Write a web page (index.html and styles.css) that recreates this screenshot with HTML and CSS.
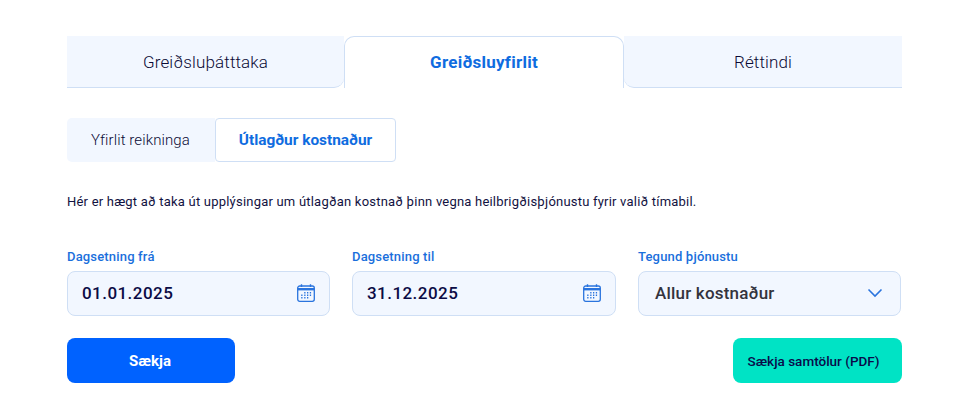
FILE: index.html
```html
<!DOCTYPE html>
<html lang="is">
<head>
<meta charset="utf-8">
<title>Greiðsluyfirlit</title>
<link rel="stylesheet" href="styles.css">
</head>
<body>
<main class="page">
  <nav class="tabs">
    <a class="tab">Greiðsluþátttaka</a>
    <a class="tab tab-active">Greiðsluyfirlit</a>
    <a class="tab">Réttindi</a>
  </nav>
  <div class="subtabs">
    <a class="subtab">Yfirlit reikninga</a>
    <a class="subtab subtab-active">Útlagður kostnaður</a>
  </div>
  <p class="intro">Hér er hægt að taka út upplýsingar um útlagðan kostnað þinn vegna heilbrigðisþjónustu fyrir valið tímabil.</p>
  <div class="fields">
    <div class="field">
      <label class="label">Dagsetning frá</label>
      <div class="control">
        <span class="value">01.01.2025</span>
        <svg class="cal" viewBox="0 0 18 18" width="18" height="18" fill="none" stroke="#2a74de" stroke-width="1.3">
          <rect x="0.7" y="2" width="16.6" height="15.3" rx="2"/>
          <path d="M0.7 5.2h16.6" stroke-width="2.4"/>
          <path d="M4.5 0.3v2.6M13.5 0.3v2.6" stroke-width="1.4"/>
          <path d="M7.2 8.8h1.3M10 8.8h1.3M12.8 8.8h1.3M4.2 11.2h1.3M7.2 11.2h1.3M10 11.2h1.3M12.8 11.2h1.3M4.2 13.8h1.3M7.2 13.8h1.3M10 13.8h1.3" stroke-width="1.5"/>
        </svg>
      </div>
    </div>
    <div class="field">
      <label class="label">Dagsetning til</label>
      <div class="control">
        <span class="value">31.12.2025</span>
        <svg class="cal" viewBox="0 0 18 18" width="18" height="18" fill="none" stroke="#2a74de" stroke-width="1.3">
          <rect x="0.7" y="2" width="16.6" height="15.3" rx="2"/>
          <path d="M0.7 5.2h16.6" stroke-width="2.4"/>
          <path d="M4.5 0.3v2.6M13.5 0.3v2.6" stroke-width="1.4"/>
          <path d="M7.2 8.8h1.3M10 8.8h1.3M12.8 8.8h1.3M4.2 11.2h1.3M7.2 11.2h1.3M10 11.2h1.3M12.8 11.2h1.3M4.2 13.8h1.3M7.2 13.8h1.3M10 13.8h1.3" stroke-width="1.5"/>
        </svg>
      </div>
    </div>
    <div class="field">
      <label class="label">Tegund þjónustu</label>
      <div class="control control-select">
        <span class="value value-select">Allur kostnaður</span>
        <svg class="chev" viewBox="0 0 16 10" width="16" height="10" fill="none" stroke="#2a74de" stroke-width="1.6"><path d="M1.5 1.5 8 8l6.5-6.5"/></svg>
      </div>
    </div>
  </div>
  <div class="actions">
    <button class="btn btn-primary">Sækja</button>
    <button class="btn btn-accent">Sækja samtölur (PDF)</button>
  </div>
</main>
</body>
</html>
```
FILE: styles.css
```css
* { box-sizing: border-box; }
html, body { margin: 0; padding: 0; background: #fff; }
body { font-family: "Roboto", "Liberation Sans", sans-serif; color: #0a0a3c; }
.page { width: 961px; height: 417px; padding: 36px 59px 0 67px; overflow: hidden; }

.tabs { display: grid; grid-template-columns: 277px 280px 278px; height: 52px; }
.tab { display: flex; align-items: center; justify-content: center; font-size: 17px; font-weight: 300; letter-spacing: 0.12px; color: #0a0a35; background: #f2f7ff; border-bottom: 1px solid #cfdff5; }
.tab:first-child { border-bottom-right-radius: 10px; }
.tab:last-child { border-bottom-left-radius: 10px; }
.tab-active { background: #fff; border: 1px solid #cfdff5; border-bottom: 0; border-radius: 10px 10px 0 0; padding-bottom: 1px; color: #0f6ce0; font-weight: 700; font-size: 17px; letter-spacing: 0.25px; }

.subtabs { display: flex; margin-top: 30px; height: 44px; }
.subtab { display: flex; align-items: center; justify-content: center; font-size: 15px; font-weight: 300; letter-spacing: 0.1px; color: #0a0a35; }
.subtabs .subtab:first-child { width: 148px; padding-right: 1px; background: #f2f7ff; border-radius: 5px 0 0 5px; }
.subtabs .subtab-active { width: 181px; padding-right: 0; background: #fff; border: 1px solid #cfdff5; border-radius: 4px; color: #0f6ce0; font-weight: 700; font-size: 15.4px; letter-spacing: 0; }

.intro { margin: 32px 0 0; height: 16px; font-size: 13px; line-height: 16px; color: #12123f; white-space: nowrap; letter-spacing: 0.21px; }

.fields { display: grid; grid-template-columns: 263px 264px 263px; column-gap: 22px; margin-top: 39px; }
.label { display: block; height: 16px; font-size: 13px; line-height: 16px; font-weight: 500; letter-spacing: 0.17px; color: #1a6fdc; }
.control { display: flex; align-items: center; justify-content: space-between; height: 45px; margin-top: 6px; padding: 0 14px 1px 14px; background: #f2f7ff; border: 1px solid #cfdff5; border-radius: 8px; }
.value { font-size: 17px; font-weight: 500; color: #0b0b45; letter-spacing: 0.45px; }
.value-select { color: #33333d; letter-spacing: 0.2px; padding-left: 2px; }
.control-select { padding-right: 17px; }
.cal { display: block; }
.chev { display: block; }

.actions { display: flex; justify-content: space-between; margin-top: 22px; }
.btn { height: 45px; border: 0; border-radius: 8px; font-family: inherit; font-weight: 700; }
.btn-primary { width: 168px; background: #0062ff; color: #fff; font-size: 15px; padding: 0 2px 0 0; }
.btn-accent { width: 169px; background: #00e3c5; color: #0a0a4a; font-size: 13.5px; font-weight: 500; letter-spacing: 0; padding: 0 8px 0 0; }
```
